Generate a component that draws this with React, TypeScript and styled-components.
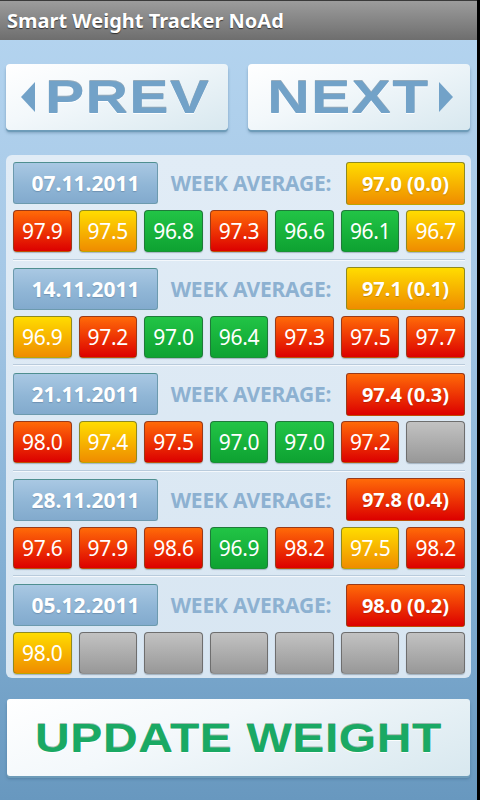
import React from 'react';
import styled, { createGlobalStyle, css } from 'styled-components';

type Level = 'red' | 'yellow' | 'green' | 'empty';

const GlobalStyle = createGlobalStyle`
  html, body {
    margin: 0;
    padding: 0;
    background: #000;
  }
  body {
    font-family: "Noto Sans", "Open Sans", "DejaVu Sans", sans-serif;
  }
`;

const Screen = styled.div`
  width: 477px;
  height: 800px;
  display: flex;
  flex-direction: column;
  background: linear-gradient(180deg, #b5d5f0 0%, #a6c8e6 35%, #84b0d4 70%, #6898bf 100%);
  overflow: hidden;
`;

const TitleBar = styled.div`
  height: 39px;
  flex-shrink: 0;
  display: flex;
  align-items: center;
  padding-left: 7px;
  border-top: 1px solid #3a3a3a;
  background: linear-gradient(180deg, #9c9c9c 0%, #858585 50%, #6e6e6e 100%);
  color: #fff;
  font-weight: 700;
  font-size: 20px;
  text-shadow: 0 1px 1px rgba(0, 0, 0, 0.6);
`;

const NavRow = styled.div`
  display: flex;
  gap: 20px;
  padding: 24px 7px 0 6px;
`;

const BigButton = styled.button`
  flex: 1;
  border: none;
  border-radius: 4px;
  background: linear-gradient(160deg, #ffffff 0%, #f3f8fb 40%, #d8e8ef 100%);
  box-shadow: 0 2px 0 #6e9cb9, 0 3px 3px rgba(40, 80, 110, 0.35);
  display: flex;
  align-items: center;
  justify-content: center;
  padding: 0;
  font-family: "Liberation Sans", Arial, sans-serif;
  font-weight: 700;
  cursor: pointer;
`;

const NavButton = styled(BigButton)`
  height: 66px;
  gap: 8px;
`;

const Arrow = styled.span<{ $dir: 'left' | 'right' }>`
  width: 0;
  height: 0;
  border-top: 15px solid transparent;
  border-bottom: 15px solid transparent;
  ${p =>
    p.$dir === 'left'
      ? css`border-right: 14px solid #72a2c8;`
      : css`border-left: 14px solid #72a2c8;`}
`;

const NavLabel = styled.span`
  display: inline-block;
  font-size: 46px;
  line-height: 1;
  color: #72a2c8;
  transform: scaleX(1.28);
  margin: 0 20px;
  text-shadow: 0 -1px 0 rgba(40, 80, 110, 0.45), 0 1px 0 rgba(255, 255, 255, 0.9);
  letter-spacing: 1px;
`;

const Panel = styled.div`
  margin: 25px 6px 0 6px;
  padding: 7px 6px 4px 7px;
  background: linear-gradient(180deg, #e1ecf6 0%, #d8e6f2 100%);
  border-radius: 6px;
  display: flex;
  flex-direction: column;
`;

const Week = styled.div<{ $last?: boolean }>`
  display: flex;
  flex-direction: column;
  gap: 6px;
  ${p =>
    !p.$last &&
    css`
      padding-bottom: 6.5px;
      margin-bottom: 8px;
      border-bottom: 1px solid #b9cbdc;
      box-shadow: 0 1px 0 #f4f8fc;
    `}
`;

const Header = styled.div`
  display: flex;
  align-items: center;
  justify-content: space-between;
  height: 42px;
`;

const DateBox = styled.div`
  width: 143px;
  height: 40px;
  border: 1px solid #6c9aae;
  border-top-color: #4f8f90;
  border-radius: 3px;
  background: linear-gradient(180deg, #a9c8e3 0%, #90b6d6 55%, #82aacd 100%);
  display: flex;
  align-items: center;
  justify-content: center;
  color: #fff;
  font-weight: 700;
  font-size: 21px;
  text-shadow: 0 1px 1px rgba(60, 90, 120, 0.35);
`;

const AvgLabel = styled.span`
  color: #8db1d1;
  font-weight: 700;
  font-size: 21px;
  letter-spacing: -0.2px;
  margin-left: -2px;
`;

const levelColors: Record<Level, { top: string; bottom: string; border: string }> = {
  red: { top: '#ff6a08', bottom: '#dc0000', border: '#9a3a18' },
  yellow: { top: '#ffdc00', bottom: '#ef8c00', border: '#8f8a20' },
  green: { top: '#22c446', bottom: '#0ea232', border: '#1f7a3a' },
  empty: { top: '#c2c2c2', bottom: '#989898', border: '#6e6e6e' },
};

const colored = (level: Level) => {
  const c = levelColors[level];
  return css`
    background: linear-gradient(180deg, ${c.top} 0%, ${c.bottom} 100%);
    border: 1px solid ${c.border};
    border-bottom-color: rgba(0, 0, 0, 0.25);
  `;
};

const AvgBox = styled.div<{ $level: Level }>`
  width: 117px;
  height: 41px;
  border-radius: 3px;
  ${p => colored(p.$level)}
  display: flex;
  align-items: center;
  justify-content: center;
  color: #fff;
  font-weight: 700;
  font-size: 20px;
  text-shadow: 0 1px 1px rgba(0, 0, 0, 0.2);
`;

const Days = styled.div`
  display: grid;
  grid-template-columns: repeat(7, 1fr);
  gap: 7px;
  height: 42px;
`;

const Day = styled.div<{ $level: Level }>`
  border-radius: 4px;
  ${p => colored(p.$level)}
  box-shadow: 0 1px 1px rgba(60, 80, 100, 0.35);
  display: flex;
  align-items: center;
  justify-content: center;
  color: #fff;
  font-size: 21px;
  letter-spacing: -0.3px;
`;

const Footer = styled.div`
  flex: 1;
  display: flex;
  align-items: flex-start;
  padding: 21px 7px 0 7px;
`;

const UpdateButton = styled(BigButton)`
  height: 77px;
  border-radius: 3px;
`;

const UpdateLabel = styled.span`
  display: inline-block;
  font-size: 40px;
  line-height: 1;
  color: #1aa964;
  transform: scaleX(1.2);
  text-shadow: 0 -1px 0 rgba(10, 80, 40, 0.35), 0 1px 0 rgba(255, 255, 255, 0.9);
  letter-spacing: 0.5px;
`;

interface WeekData {
  date: string;
  avg: string;
  avgLevel: Level;
  days: [string, Level][];
}

const weeks: WeekData[] = [
  {
    date: '07.11.2011',
    avg: '97.0 (0.0)',
    avgLevel: 'yellow',
    days: [
      ['97.9', 'red'],
      ['97.5', 'yellow'],
      ['96.8', 'green'],
      ['97.3', 'red'],
      ['96.6', 'green'],
      ['96.1', 'green'],
      ['96.7', 'yellow'],
    ],
  },
  {
    date: '14.11.2011',
    avg: '97.1 (0.1)',
    avgLevel: 'yellow',
    days: [
      ['96.9', 'yellow'],
      ['97.2', 'red'],
      ['97.0', 'green'],
      ['96.4', 'green'],
      ['97.3', 'red'],
      ['97.5', 'red'],
      ['97.7', 'red'],
    ],
  },
  {
    date: '21.11.2011',
    avg: '97.4 (0.3)',
    avgLevel: 'red',
    days: [
      ['98.0', 'red'],
      ['97.4', 'yellow'],
      ['97.5', 'red'],
      ['97.0', 'green'],
      ['97.0', 'green'],
      ['97.2', 'red'],
      ['', 'empty'],
    ],
  },
  {
    date: '28.11.2011',
    avg: '97.8 (0.4)',
    avgLevel: 'red',
    days: [
      ['97.6', 'red'],
      ['97.9', 'red'],
      ['98.6', 'red'],
      ['96.9', 'green'],
      ['98.2', 'red'],
      ['97.5', 'yellow'],
      ['98.2', 'red'],
    ],
  },
  {
    date: '05.12.2011',
    avg: '98.0 (0.2)',
    avgLevel: 'red',
    days: [
      ['98.0', 'yellow'],
      ['', 'empty'],
      ['', 'empty'],
      ['', 'empty'],
      ['', 'empty'],
      ['', 'empty'],
      ['', 'empty'],
    ],
  },
];

const App: React.FC = () => {
  return (
    <>
      <GlobalStyle />
      <Screen>
        <TitleBar>Smart Weight Tracker NoAd</TitleBar>
        <NavRow>
          <NavButton type="button">
            <Arrow $dir="left" />
            <NavLabel>PREV</NavLabel>
          </NavButton>
          <NavButton type="button">
            <NavLabel>NEXT</NavLabel>
            <Arrow $dir="right" />
          </NavButton>
        </NavRow>
        <Panel>
          {weeks.map((w, i) => (
            <Week key={w.date} $last={i === weeks.length - 1}>
              <Header>
                <DateBox>{w.date}</DateBox>
                <AvgLabel>WEEK AVERAGE:</AvgLabel>
                <AvgBox $level={w.avgLevel}>{w.avg}</AvgBox>
              </Header>
              <Days>
                {w.days.map(([v, l], j) => (
                  <Day key={j} $level={l}>
                    {v}
                  </Day>
                ))}
              </Days>
            </Week>
          ))}
        </Panel>
        <Footer>
          <UpdateButton type="button">
            <UpdateLabel>UPDATE WEIGHT</UpdateLabel>
          </UpdateButton>
        </Footer>
      </Screen>
    </>
  );
};

export default App;
